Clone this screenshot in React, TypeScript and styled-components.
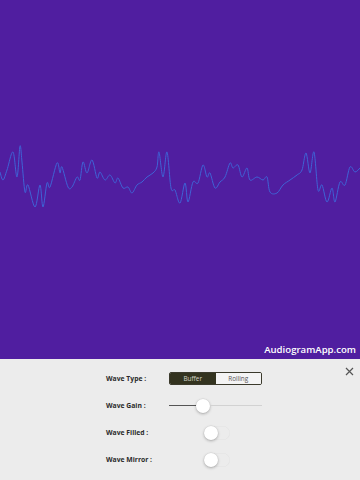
import React from "react";
import styled, { createGlobalStyle } from "styled-components";

const GlobalStyle = createGlobalStyle`
  html, body {
    margin: 0;
    padding: 0;
    background: #ececec;
  }
  body {
    font-family: "Open Sans", "Liberation Sans", sans-serif;
  }
`;

const Screen = styled.div`
  width: 360px;
  height: 480px;
  display: flex;
  flex-direction: column;
  overflow: hidden;
`;

const Canvas = styled.div`
  position: relative;
  height: 359px;
  flex: none;
  background: #501ea0;
  display: flex;
  align-items: center;
`;

const Watermark = styled.div`
  position: absolute;
  right: 4px;
  bottom: 3px;
  color: #ffffff;
  font-family: "Open Sans", "Liberation Sans", sans-serif;
  font-weight: 600;
  font-size: 9.6px;
`;

const Panel = styled.div`
  position: relative;
  flex: 1;
  background: #ececec;
  padding: 6px 0 0 106px;
`;

const Close = styled.button`
  position: absolute;
  top: 6px;
  right: 5px;
  width: 12px;
  height: 12px;
  padding: 0;
  border: none;
  background: none;
  display: flex;
  align-items: center;
  justify-content: center;
`;

const Controls = styled.div`
  display: grid;
  grid-template-columns: 63px 93px;
  grid-auto-rows: 27px;
  align-items: center;
`;

const Label = styled.div`
  font-size: 6.8px;
  font-weight: 700;
  color: #2a2a2a;
`;

const Segmented = styled.div`
  display: flex;
  height: 13px;
  border: 1px solid #3b3a2c;
  border-radius: 2px;
  overflow: hidden;
  box-sizing: border-box;
`;

const Segment = styled.div<{ $active?: boolean }>`
  flex: 1;
  display: flex;
  align-items: center;
  justify-content: center;
  font-size: 6.4px;
  background: ${(p) => (p.$active ? "#33331f" : "#f4f4f4")};
  color: ${(p) => (p.$active ? "#d6d6c8" : "#555555")};
`;

const Slider = styled.div`
  height: 14px;
  display: flex;
  align-items: center;
`;

const Track = styled.div<{ $filled?: boolean }>`
  height: 1px;
  background: ${(p) => (p.$filled ? "#555555" : "#d2d2d2")};
`;

const Knob = styled.div`
  width: 14px;
  height: 14px;
  border-radius: 50%;
  background: #ffffff;
  box-shadow: 0 1px 3px rgba(0, 0, 0, 0.28), 0 0 0 0.5px rgba(0, 0, 0, 0.06);
  flex: none;
`;

const Switch = styled.div`
  margin-left: 35px;
  width: 26px;
  height: 14px;
  border-radius: 7px;
  box-shadow: inset 0 0 0 0.5px rgba(0, 0, 0, 0.04);
  display: flex;
  align-items: center;
`;

const waveform = [
  [0, 172], [3, 180], [7, 170], [13, 152], [17, 177], [20, 146], [22, 162], [25, 192],
  [28, 185], [35, 207], [40, 185], [43, 207], [47, 183], [50, 187], [57, 163], [60, 173],
  [62, 167], [68, 187], [72, 187], [77, 177], [80, 180], [83, 162], [87, 173], [92, 160],
  [97, 178], [100, 172], [105, 180], [110, 175], [115, 183], [118, 178], [123, 188],
  [128, 187], [132, 193], [137, 185], [142, 182], [147, 177], [153, 173], [157, 167],
  [159, 152], [163, 177], [167, 152], [171, 188], [175, 190], [180, 203], [185, 183],
  [188, 202], [193, 182], [198, 183], [203, 165], [207, 177], [210, 173], [215, 188],
  [220, 182], [225, 177], [230, 163], [233, 168], [238, 165], [242, 177], [247, 168],
  [250, 180], [257, 177], [263, 180], [267, 177], [270, 192], [277, 193], [283, 185],
  [290, 180], [297, 175], [302, 170], [306, 153], [310, 173], [314, 152], [318, 190],
  [322, 185], [327, 202], [332, 188], [335, 202], [340, 182], [345, 185], [350, 167],
  [355, 172], [360, 168],
];

// catmull-rom -> cubic bezier, so the trace looks smooth like the original
const smoothPath = (pts: number[][]) => {
  let d = `M${pts[0][0]},${pts[0][1]}`;
  for (let i = 0; i < pts.length - 1; i++) {
    const p0 = pts[i - 1] || pts[i];
    const p1 = pts[i];
    const p2 = pts[i + 1];
    const p3 = pts[i + 2] || p2;
    const c1x = p1[0] + (p2[0] - p0[0]) / 6;
    const c1y = p1[1] + (p2[1] - p0[1]) / 6;
    const c2x = p2[0] - (p3[0] - p1[0]) / 6;
    const c2y = p2[1] - (p3[1] - p1[1]) / 6;
    d += ` C${c1x.toFixed(1)},${c1y.toFixed(1)} ${c2x.toFixed(1)},${c2y.toFixed(1)} ${p2[0]},${p2[1]}`;
  }
  return d;
};

const Wave = () => (
  <svg width="360" height="359" viewBox="0 0 360 359">
    <path
      d={smoothPath(waveform)}
      fill="none"
      stroke="#3f63d6"
      strokeWidth="1"
      strokeLinejoin="round"
    />
  </svg>
);

const App = () => {
  const gain = 0.34;
  return (
    <Screen>
      <GlobalStyle />
      <Canvas>
        <Wave />
        <Watermark>AudiogramApp.com</Watermark>
      </Canvas>
      <Panel>
        <Close aria-label="close">
          <svg width="9" height="9" viewBox="0 0 9 9">
            <path d="M1 1L8 8M8 1L1 8" stroke="#555" strokeWidth="1.2" />
          </svg>
        </Close>
        <Controls>
          <Label>Wave Type :</Label>
          <Segmented>
            <Segment $active>Buffer</Segment>
            <Segment>Rolling</Segment>
          </Segmented>

          <Label>Wave Gain :</Label>
          <Slider>
            <Track $filled style={{ width: `${gain * 100 - 7}px` }} />
            <Knob />
            <Track style={{ flex: 1 }} />
          </Slider>

          <Label>Wave Filled :</Label>
          <Switch>
            <Knob />
          </Switch>

          <Label>Wave Mirror :</Label>
          <Switch>
            <Knob />
          </Switch>
        </Controls>
      </Panel>
    </Screen>
  );
};

export default App;
